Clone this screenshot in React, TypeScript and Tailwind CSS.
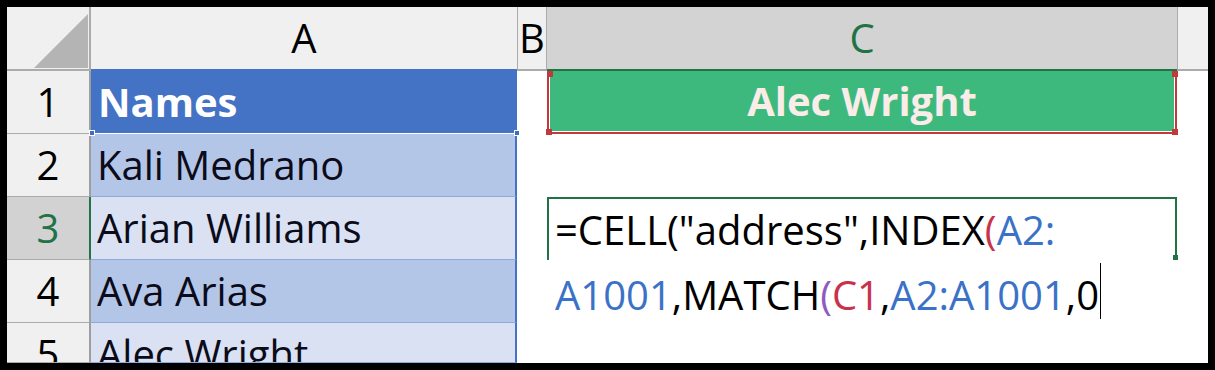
import React from 'react';

const names = ['Kali Medrano', 'Arian Williams', 'Ava Arias', 'Alec Wright'];

const font = "font-['Open_Sans','Noto_Sans',sans-serif]";

const RowHead: React.FC<{ n: number; active?: boolean }> = ({ n, active }) => (
  <div
    className={
      active
        ? 'overflow-hidden border-b border-[#ababab] border-r-2 border-r-[#217346] bg-[#d2d2d2] text-center text-[40px] leading-[62px] text-[#217346]'
        : 'overflow-hidden border-b border-[#ababab] border-r-2 border-r-[#9e9e9e] bg-[#f0f0f0] text-center text-[40px] leading-[62px] text-black'
    }
  >
    {n}
  </div>
);

const Handle: React.FC<{ className: string }> = ({ className }) => (
  <span className={'absolute z-20 h-[6px] w-[6px] ' + className} />
);

export default function App() {
  return (
    <div className={`h-[370px] w-[1215px] bg-black p-[7px] ${font}`}>
      <div className="grid h-full w-full grid-cols-[84px_426px_30px_630px_31px] grid-rows-[64px_63px_63px_63px_63px_40px] overflow-hidden bg-white">
        {/* header row */}
        <div className="border-b-2 border-r-2 border-[#ababab] bg-[#f0f0f0]">
          <svg width="84" height="62" viewBox="0 0 84 62">
            <polygon points="27,61 81,61 81,7" fill="#b4b4b4" />
          </svg>
        </div>
        <div className="flex items-center justify-center border-b-2 border-[#4472c4] bg-[#f0f0f0] text-[40px] leading-none">
          A
        </div>
        <div className="flex items-center justify-center border-b-2 border-l border-r border-[#ababab] bg-[#f0f0f0] text-[40px] leading-none">
          B
        </div>
        <div className="flex items-center justify-center border-b-2 border-[#217346] bg-[#d3d3d3] text-[40px] leading-none text-[#217346]">
          C
        </div>
        <div className="border-b-2 border-l border-[#ababab] bg-[#f0f0f0]" />

        {/* row 1 */}
        <RowHead n={1} />
        <div className="relative flex items-center border-b border-white bg-[#4472c4] pl-[7px] text-[40px] font-bold text-white">
          Names
          <Handle className="-bottom-[3px] -left-[2px] border border-white bg-[#3b6fc7]" />
          <Handle className="-bottom-[3px] -right-[3px] border border-white bg-[#3b6fc7]" />
        </div>
        <div />
        <div className="relative border-x-2 border-b-2 border-[#c0393b]">
          <div className="flex h-full items-center justify-center border border-t-0 border-white bg-[#3eb97e] text-[40px] font-bold text-[#f9ece9]">
            Alec Wright
          </div>
          <Handle className="-left-[2px] top-0 h-[3px] bg-[#c0393b]" />
          <Handle className="-bottom-[3px] -left-[3px] bg-[#c0393b]" />
          <Handle className="-right-[3px] top-0 h-[3px] bg-[#c0393b]" />
          <Handle className="-bottom-[3px] -right-[3px] bg-[#c0393b]" />
        </div>
        <div />

        {/* rows 2-5 */}
        {names.map((name, i) => {
          const row = i + 2;
          return (
            <React.Fragment key={row}>
              <RowHead n={row} active={row === 3} />
              <div
                className={
                  (i % 2 === 0 ? 'bg-[#b4c6e7]' : 'bg-[#d9e1f2]') +
                  ' overflow-hidden whitespace-nowrap border-b border-[#8eaadb] border-r-2 border-r-[#4472c4] pl-[6px] text-[40px] leading-[62px] text-[#0b0b1a]'
                }
              >
                {name}
              </div>
              <div />
              {row === 3 ? (
                <div className="relative z-10 border-x-2 border-t-2 border-[#217346]">
                  <div className="-mt-[2px] whitespace-nowrap pl-[6px] text-[40px] leading-[65px] text-black">
                    =CELL("address",INDEX<span className="text-[#c8324b]">(</span>
                    <span className="text-[#3a72c8]">A2:</span>
                    <br />
                    <span className="text-[#3a72c8]">A1001</span>,MATCH
                    <span className="text-[#8e5bbf]">(</span>
                    <span className="text-[#c8324b]">C1</span>,
                    <span className="text-[#3a72c8]">A2:A1001</span>,0
                    <span className="ml-[1px] inline-block h-[56px] w-[1px] bg-black align-[-9px]" />
                  </div>
                  <span className="absolute -right-[3px] bottom-0 h-[5px] w-[5px] bg-[#217346]" />
                </div>
              ) : (
                <div />
              )}
              <div />
            </React.Fragment>
          );
        })}
      </div>
    </div>
  );
}
